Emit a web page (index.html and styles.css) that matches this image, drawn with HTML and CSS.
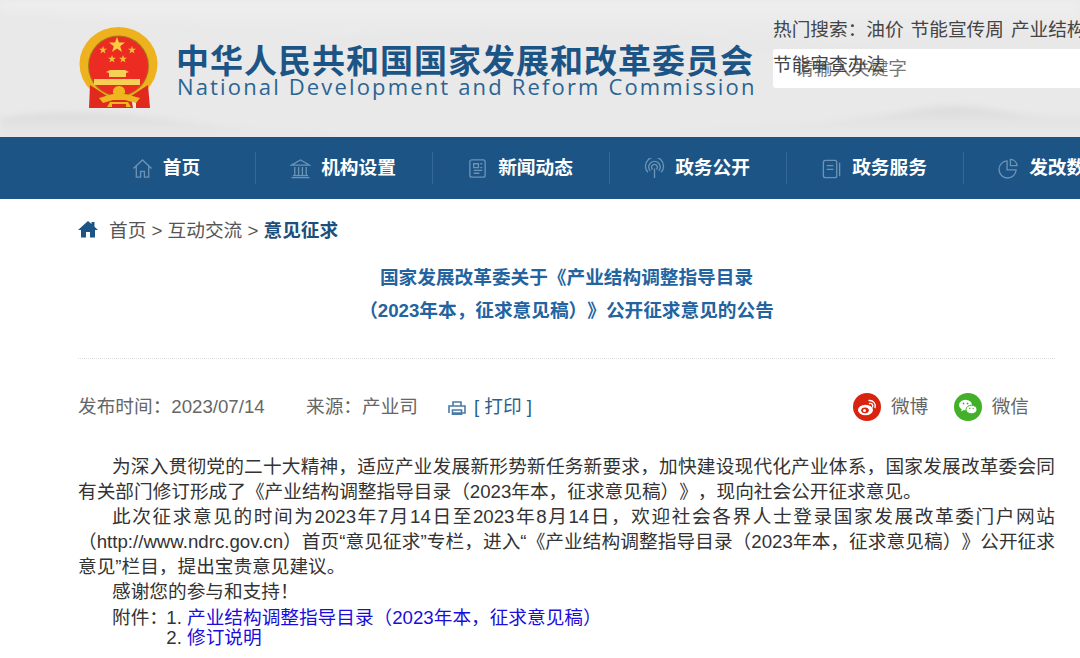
FILE: index.html
```html
<!DOCTYPE html>
<html lang="zh-CN">
<head>
<meta charset="utf-8">
<title>国家发展改革委关于《产业结构调整指导目录（2023年本，征求意见稿）》公开征求意见的公告</title>
<link rel="stylesheet" href="styles.css">
</head>
<body>
<header class="masthead">
  <svg class="hills" viewBox="0 0 1080 137" preserveAspectRatio="none" aria-hidden="true">
    <defs>
      <linearGradient id="hillA" x1="0" y1="0" x2="0" y2="1"><stop offset="0" stop-color="#d8d8d8" stop-opacity=".9"/><stop offset="1" stop-color="#efefef" stop-opacity=".1"/></linearGradient>
      <linearGradient id="hillB" x1="0" y1="0" x2="0" y2="1"><stop offset="0" stop-color="#f0f0f0" stop-opacity=".7"/><stop offset="1" stop-color="#f0f0f0" stop-opacity="0"/></linearGradient>
      <filter id="soft" x="-5%" y="-20%" width="110%" height="140%"><feGaussianBlur stdDeviation="3"/></filter>
    </defs>
    <g filter="url(#soft)">
      <path d="M0 0H1080V30C900 40 760 24 560 34S200 20 0 12Z" fill="url(#hillB)"/>
      <path d="M0 118C50 110 120 112 190 122S330 134 420 137V150H0Z" fill="url(#hillA)"/>
      <path d="M640 137C720 122 790 128 860 118S940 104 980 108 1050 122 1090 116V150H640Z" fill="url(#hillA)"/>
      <path d="M300 40C420 28 540 24 700 36S900 44 1020 30L1080 40V48C900 60 600 46 300 52Z" fill="#e6e6e6" opacity=".4"/>
    </g>
  </svg>
  <div class="brand">
    <svg class="emblem" viewBox="0 0 100 100" aria-hidden="true">
      <ellipse cx="48.500" cy="44" rx="39" ry="37" fill="#eeb21f"/>
      <circle cx="48.500" cy="46" r="30.500" fill="#a8771a"/>
      <circle cx="48.500" cy="46" r="29.500" fill="#ec2c22"/>
      <path d="M47 17l2 5.600h6l-4.800 3.600 1.800 5.800-5-3.500-5 3.500 1.800-5.800-4.800-3.600h6z" fill="#f7cf3e"/>
      <path d="M33 26l1 2.800h3l-2.400 1.800.9 2.900-2.500-1.700-2.500 1.700.9-2.900-2.400-1.800h3zM62 26l1 2.800h3l-2.400 1.800.9 2.900-2.500-1.700-2.500 1.700.9-2.900-2.400-1.800h3zM42 35l1 2.800h3l-2.400 1.800.9 2.900-2.500-1.700-2.500 1.700.9-2.900-2.400-1.800h3zM53 35l1 2.800h3l-2.400 1.800.9 2.900-2.500-1.700-2.500 1.700.9-2.900-2.400-1.800h3z" fill="#f2c234"/>
      <path d="M36 52L40 50H55L59 52 56 53V57H39V53ZM24 59H70V65H24Z" fill="#f6cf55"/>
      <path d="M20 65L37 76 35 88 19 88ZM78 65L61 76 63 88 80 88ZM32 79H66V88H32Z" fill="#e02a1e"/>
      <path d="M49 66C44 66 42.500 70 43 73 44 75 54 75 55 73 55.500 70 54 66 49 66Z" fill="#efb71f"/>
      <path d="M29 78L43 74H55L70 78 66 83 55 80H43L33 83ZM40 82H58L61 87H37Z" fill="#efb71f"/>
      <path d="M42 84H56V88H42Z" fill="#e02a1e"/>
    </svg>
    <div class="brand-text">
      <div class="brand-cn">中华人民共和国国家发展和改革委员会</div>
      <div class="brand-en">National Development and Reform Commission</div>
    </div>
  </div>
  <div class="search">
    <div class="search-box">请输入关键字</div>
    <div class="hot">
      <div class="hot-line">热门搜索：<span class="hot-word">油价</span><span class="hot-word">节能宣传周</span><span class="hot-word">产业结构调整</span></div>
      <div class="hot-line">节能审查办法</div>
    </div>
  </div>
</header>

<nav class="nav">
  <a class="nav-item">
    <svg class="nav-icon" viewBox="0 0 22 22"><path d="M1.500 11L11 2l9.500 9M4.500 9v11h4.500v-6h4v6h4.500V9"/></svg><span class="nav-label">首页</span></a>
  <a class="nav-item">
    <svg class="nav-icon" viewBox="0 0 22 22"><path d="M1.500 7.500L11 2l9.500 5.500zM3 18.500h16M1.500 20.500h19M5 9.500v9M9 9.500v9M13 9.500v9M17 9.500v9"/></svg><span class="nav-label">机构设置</span></a>
  <a class="nav-item">
    <svg class="nav-icon" viewBox="0 0 22 22"><rect x="3" y="2" width="16" height="18" rx="2"/><path d="M7 6h5v4H7zM14 6h2M14 10h2M7 13h9M7 16h6"/></svg><span class="nav-label">新闻动态</span></a>
  <a class="nav-item">
    <svg class="nav-icon" viewBox="0 0 22 22"><path d="M11 11v10M4 15A9.500 9.500 0 1 1 18 15M6.500 13.500a6 6 0 1 1 9 0M9 12a3 3 0 1 1 4 0"/></svg><span class="nav-label">政务公开</span></a>
  <a class="nav-item">
    <svg class="nav-icon" viewBox="0 0 22 22"><rect x="2.500" y="2.500" width="14" height="18" rx="2"/><path d="M6 8h7M6 12h7M19.500 5v14"/></svg><span class="nav-label">政务服务</span></a>
  <a class="nav-item">
    <svg class="nav-icon" viewBox="0 0 22 22"><path d="M9.500 3a9 9 0 1 0 9.500 9.500H9.500zM13 1.500v6.500h7A7.500 7.500 0 0 0 13 1.500z"/></svg><span class="nav-label">发改数据</span></a>
</nav>

<main class="page">
  <div class="crumbs">
    <svg class="crumb-home" viewBox="0 0 20 18"><path d="M10 1L0 10h3v7.500h5v-5.500h4v5.500h5V10h3l-3.500-3.200V2h-3v2.100z"/></svg>
    <span>首页 &gt; 互动交流 &gt; </span><strong class="crumb-current">意见征求</strong>
  </div>

  <h1 class="title">国家发展改革委关于《产业结构调整指导目录<br>（2023年本，征求意见稿）》公开征求意见的公告</h1>

  <div class="meta">
    <span class="meta-date">发布时间：2023/07/14</span>
    <span class="meta-source">来源：产业司</span>
    <span class="meta-print">
      <svg class="print-icon" viewBox="0 0 18 14"><path d="M5 4.500V1h8v3.500M1 12V5h16v7h-3M4 12h10M4.500 9h9v4.300h-9z"/></svg>
      <span class="meta-text">[ 打印 ]</span>
    </span>
    <span class="share">
      <span class="share-item">
        <svg class="share-icon" viewBox="0 0 28 28"><circle cx="14" cy="14" r="14" fill="#d8230f"/><ellipse cx="12.500" cy="17" rx="7.500" ry="5.200" fill="#fff"/><ellipse cx="12" cy="17.300" rx="3.800" ry="2.900" fill="#d8230f"/><circle cx="11.500" cy="17.500" r="1.500" fill="#fff"/><path d="M16 7.500a5.500 5.500 0 0 1 6 7M16.500 10.500a2.500 2.500 0 0 1 3 3.500" fill="none" stroke="#fff" stroke-width="1.400" stroke-linecap="round"/></svg>
        <span class="meta-text">微博</span>
      </span>
      <span class="share-item">
        <svg class="share-icon" viewBox="0 0 28 28"><circle cx="14" cy="14" r="14" fill="#43b02a"/><ellipse cx="11.500" cy="12" rx="6.500" ry="5.200" fill="#fff"/><path d="M8 15.500l-1 3 3.500-2z" fill="#fff"/><ellipse cx="17.500" cy="16.500" rx="5.500" ry="4.300" fill="#fff" stroke="#43b02a" stroke-width="1"/><circle cx="9.500" cy="10.500" r=".9" fill="#43b02a"/><circle cx="13.500" cy="10.500" r=".9" fill="#43b02a"/><circle cx="15.800" cy="15.500" r=".7" fill="#43b02a"/><circle cx="19.200" cy="15.500" r=".7" fill="#43b02a"/></svg>
        <span class="meta-text">微信</span>
      </span>
    </span>
  </div>

  <article class="article">
    <p>为深入贯彻党的二十大精神，适应产业发展新形势新任务新要求，加快建设现代化产业体系，国家发展改革委会同有关部门修订形成了《产业结构调整指导目录（2023年本，征求意见稿）》，现向社会公开征求意见。</p>
    <p>此次征求意见的时间为2023年7月14日至2023年8月14日，欢迎社会各界人士登录国家发展改革委门户网站（http://www.ndrc.gov.cn）首页“意见征求”专栏，进入“《产业结构调整指导目录（2023年本，征求意见稿）》公开征求意见”栏目，提出宝贵意见建议。</p>
    <p>感谢您的参与和支持！</p>
    <div class="attach">
      <span class="attach-label">附件：</span>
      <ol class="attach-list">
        <li><a>产业结构调整指导目录（2023年本，征求意见稿）</a></li>
        <li><a>修订说明</a></li>
      </ol>
    </div>
  </article>
</main>
</body>
</html>
```
FILE: styles.css
```css
* { box-sizing: border-box; }
html, body { margin: 0; height: 658px; overflow: hidden; }
body {
  background: #fff;
  color: #333;
  font-family: "Liberation Sans", "Noto Sans CJK SC", sans-serif;
  font-size: 18.67px;
  text-spacing-trim: space-all;
}
.masthead {
  position: relative;
  height: 137px;
  background: #e9e9e9;
  overflow: hidden;
  display: flex;
}
.hills { position: absolute; inset: 0; width: 100%; height: 100%; }
.brand {
  position: relative;
  margin-left: 70px;
  padding-top: 20px;
  width: 703px;
  flex: none;
  display: flex;
}
.emblem { width: 100px; height: 100px; flex: none; }
.brand-text { margin-left: 6px; padding-top: 19px; }
.brand-cn {
  font-family: "Noto Sans CJK SC", sans-serif;
  font-size: 33px;
  font-weight: 700;
  line-height: 40px;
  letter-spacing: 1px;
  color: #1c5485;
  white-space: nowrap;
}
.brand-en {
  font-family: "Open Sans", sans-serif;
  font-size: 22px;
  line-height: 26px;
  letter-spacing: 2.150px;
  color: #2b6493;
  white-space: nowrap;
  margin-top: -6px;
  padding-left: 1px;
}
.search { position: relative; flex: 1; padding-top: 49px; }
.search-box {
  height: 39px;
  margin-right: -10px;
  padding-left: 22px;
  background: #fff;
  border-radius: 3px;
  color: #777;
  line-height: 39px;
}
.hot {
  position: absolute;
  left: 0;
  top: 12px;
  color: #444;
  line-height: 35px;
  white-space: nowrap;
}
.hot-word { margin-right: 7px; }
.nav {
  height: 62px;
  padding-left: 79px;
  background: #1c5485;
  display: flex;
  align-items: center;
  overflow: hidden;
}
.nav-item {
  flex: none;
  width: 177px;
  height: 32px;
  padding-right: 2px;
  display: flex;
  align-items: center;
  justify-content: center;
  gap: 10px;
  border-right: 1px solid #356a98;
  color: #fff;
  font-weight: 700;
  font-size: 18.67px;
  white-space: nowrap;
}
.nav-label { padding-bottom: 6px; }
.nav-icon {
  width: 21px;
  height: 21px;
  fill: none;
  stroke: #6d93b5;
  stroke-width: 1.4;
}
.page { margin-left: 78px; width: 977px; }
.crumbs {
  height: 62px;
  padding-bottom: 4px;
  display: flex;
  align-items: center;
  white-space: pre;
  color: #555;
}
.crumb-home { width: 20px; height: 18px; margin: 2px 11px 0 0; fill: #1c5485; }
.crumb-current { color: #1c4f7c; }
.title {
  margin: 0;
  padding: 0 0 31px;
  border-bottom: 1px dotted #ddd;
  text-align: center;
  font-size: 18.67px;
  line-height: 33px;
  font-weight: 700;
  color: #2263a0;
}
.meta {
  height: 96px;
  padding-bottom: 1px;
  display: flex;
  align-items: center;
  color: #666;
  white-space: nowrap;
}
.meta-date { width: 228px; padding-bottom: 5px; }
.meta-source { width: 142px; padding-bottom: 5px; }
.meta-text { padding-bottom: 5px; }
.meta-print { display: flex; align-items: center; gap: 8px; color: #2c5f8a; }
.print-icon { width: 18px; height: 14px; margin-top: 3px; fill: none; stroke: #4a7ba6; stroke-width: 1.6; }
.share { margin-left: auto; margin-right: 26px; display: flex; gap: 26px; }
.share-item { display: flex; align-items: center; gap: 9.500px; }
.share-icon { width: 28px; height: 28px; }
.article { line-height: 24.900px; text-align: justify; }
.article p { margin: 0; text-indent: 34px; }
.attach {
  padding-left: 34px;
  display: flex;
  line-height: 20px;
  margin-top: 4px;
}
.attach-label { width: 56px; flex: none; }
.attach-list { margin: 0; padding: 0 0 0 19px; }
.attach-list a { color: #1a0ddb; }
```
